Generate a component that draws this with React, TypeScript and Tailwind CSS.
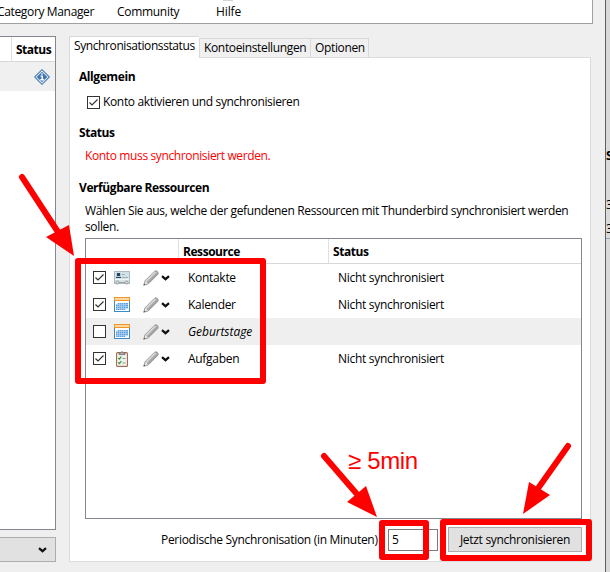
'use client';

import { ReactNode } from 'react';

interface Resource {
  name: string;
  icon: 'contacts' | 'calendar' | 'tasks';
  checked: boolean;
  status: string;
}

const resources: Resource[] = [
  { name: 'Kontakte', icon: 'contacts', checked: true, status: 'Nicht synchronisiert' },
  { name: 'Kalender', icon: 'calendar', checked: true, status: 'Nicht synchronisiert' },
  { name: 'Geburtstage', icon: 'calendar', checked: false, status: '' },
  { name: 'Aufgaben', icon: 'tasks', checked: true, status: 'Nicht synchronisiert' },
];

function Checkbox({ checked }: { checked: boolean }) {
  return (
    <svg width="13" height="13" viewBox="0 0 13 13" className="shrink-0">
      <rect x="0.5" y="0.5" width="12" height="12" fill="#fff" stroke="#333" />
      {checked && <path d="M2.5 6.5 L5 9 L10.5 3.5" fill="none" stroke="#333" strokeWidth="1.2" />}
    </svg>
  );
}

function Chevron() {
  return (
    <svg width="9" height="6" viewBox="0 0 9 6" className="shrink-0">
      <path d="M1 1.2 L4.5 4.2 L8 1.2" fill="none" stroke="#111" strokeWidth="2.2" />
    </svg>
  );
}

function Pencil() {
  return (
    <svg width="16" height="16" viewBox="0 0 16 16" className="shrink-0">
      <path d="M0.7 15.3 L2.2 10.6 L11.6 1.2 Q13 0.2 14.5 1.6 Q15.8 3 14.8 4.4 L5.4 13.8 Z" fill="#b4b4b4" stroke="#858585" strokeWidth="0.8" />
      <path d="M3 11.2 L12.2 2" stroke="#dcdcdc" strokeWidth="1.4" />
      <path d="M4.8 12.8 L14 3.6" stroke="#939393" strokeWidth="0.9" />
      <path d="M1.2 14.8 L2.5 11 L5 13.4 Z" fill="#e4e4e4" />
      <path d="M0.7 15.3 L1.3 13.4 L2.6 14.7 Z" fill="#555" />
    </svg>
  );
}

function ResourceIcon({ icon }: { icon: Resource['icon'] }) {
  if (icon === 'contacts') {
    return (
      <svg width="16" height="16" viewBox="0 0 16 16">
        <rect x="0.5" y="1.5" width="15" height="12" fill="#d3e2e7" stroke="#a9bac0" />
        <rect x="2" y="3" width="5" height="5" fill="#b4cbe0" />
        <rect x="3" y="3" width="3" height="3" fill="#29415c" />
        <rect x="2" y="7" width="5" height="1" fill="#29415c" />
        <path d="M8 4.5 H11 M8 7.5 H14" stroke="#9db2ba" />
        <path d="M1 9.5 H15" stroke="#f2f7f8" />
        <rect x="5" y="12" width="6" height="1" fill="#9aa6aa" />
        <circle cx="3.5" cy="12.5" r="1.5" fill="#ddd" stroke="#999" />
        <circle cx="12.5" cy="12.5" r="1.5" fill="#ddd" stroke="#999" />
      </svg>
    );
  }
  if (icon === 'calendar') {
    return (
      <svg width="16" height="16" viewBox="0 0 16 16">
        <rect x="0.5" y="1.5" width="15" height="13" fill="#fff" stroke="#3c8bc8" />
        <rect x="0" y="0" width="16" height="4" fill="#f0952a" />
        <rect x="1" y="1" width="14" height="2" fill="#fbd9a4" />
        <path d="M4 6 H14 V11 H11 V13 H2 V7 H4 Z" fill="#5e9ede" />
        <path d="M2 7.5 H14 M2 9.5 H14 M2 11.5 H14" stroke="#b5d3f0" strokeWidth="0.7" />
        <path d="M3.5 6 V13 M5.5 6 V13 M7.5 6 V13 M9.5 6 V13 M11.5 6 V13" stroke="#b5d3f0" strokeWidth="0.7" />
      </svg>
    );
  }
  return (
    <svg width="16" height="16" viewBox="0 0 16 16">
      <rect x="2.6" y="1.6" width="10.8" height="13.8" rx="1" fill="#fff" stroke="#a36b50" strokeWidth="1.2" />
      <rect x="3.8" y="3" width="8.4" height="11.2" fill="#eef1ee" />
      <path d="M5 3.6 V1.8 H6.6 Q8 -0.6 9.4 1.8 H11 V3.6 Z" fill="#aaa" stroke="#666" strokeWidth="0.7" />
      <path d="M4.3 6.8 L5.4 8 L7.3 5.6 M4.3 11.3 L5.4 12.5 L7.3 10.1" fill="none" stroke="#269a36" strokeWidth="1.2" />
      <path d="M8.5 7.5 H11.5 M8.5 12 H11.5" stroke="#8f9790" />
    </svg>
  );
}

function InfoIcon() {
  return (
    <svg width="16" height="16" viewBox="0 0 16 16">
      <path d="M8 0.7 L15.3 8 L8 15.3 L0.7 8 Z" fill="#e8f1f8" stroke="#5684b0" strokeWidth="1.1" strokeLinejoin="round" />
      <path d="M8 2.7 L13.3 8 L8 13.3 L2.7 8 Z" fill="#4078ad" />
      <path d="M8 4.3 V5.8 M6.5 7.1 H8.2 V10.5 M6.3 10.7 H9.9" fill="none" stroke="#fff" strokeWidth="1.4" />
    </svg>
  );
}

function Heading({ children }: { children: ReactNode }) {
  return <div className="h-4 text-[12px] leading-4 font-bold tracking-[-0.42px]">{children}</div>;
}

// Red arrows and frames drawn over the dialog
function Annotations() {
  return (
    <div className="pointer-events-none absolute inset-0">
      <svg width="610" height="572" viewBox="0 0 610 572">
        <g fill="none" stroke="#f00" strokeWidth="6" strokeLinejoin="round" strokeLinecap="round">
          <rect x="78" y="261" width="185" height="120" />
          <rect x="382" y="523" width="44" height="34" />
          <rect x="443" y="522" width="146" height="36" />
          <path d="M22 177 L58 232" />
          <path d="M324 456 L356 493" />
          <path d="M568 446 L539 487" />
        </g>
        <g fill="#f00">
          <path d="M46 237 L69 225 L74 256 Z" />
          <path d="M347 502 L366 486 L377 517 Z" />
          <path d="M529 482 L550 495 L523 514 Z" />
        </g>
      </svg>
      <div className="absolute top-[446px] left-[348px] font-['Liberation_Sans',Arial,sans-serif] text-[24px] leading-[30px] whitespace-pre text-[#f00]">≥ 5min</div>
    </div>
  );
}

export default function App() {
  return (
    <div className="relative flex h-[572px] w-[610px] overflow-hidden bg-[#efefef] font-['Open_Sans','Noto_Sans',sans-serif] text-[12px] leading-4 tracking-[-0.35px] whitespace-nowrap text-black">
      <div className="flex w-[605px] shrink-0 flex-col">
        {/* Toolbar */}
        <div className="relative flex h-6 w-[593px] border-r border-b border-[#a0a0a0] bg-white pt-1">
          <div className="-ml-[3px] w-[120px]">Category Manager</div>
          <div className="w-[99px] tracking-[-0.3px]">Community</div>
          <div className="tracking-[-0.1px]">Hilfe</div>
          <div className="absolute top-0 left-[223px] h-px w-[10px] bg-[#d4d4d4]" />
        </div>

        <div className="flex pt-3">
          {/* Account list */}
          <div className="w-14">
            <div className="h-[494px] border-t border-r border-b border-[#828790] bg-white">
              <div className="flex h-[25px] border-b border-[#d8d8d8]">
                <div className="w-3 border-r border-[#e0e0e0]" />
                <div className="pt-[5px] pl-1 font-bold tracking-[-0.5px]">Status</div>
              </div>
              <div className="flex h-[29px] justify-end bg-[#f0f0f0] pt-[7px] pr-[5px]">
                <InfoIcon />
              </div>
            </div>
            <div className="mt-[7px] flex h-[25px] items-center justify-end border border-l-0 border-[#adadad] bg-[#e1e1e1] pr-2">
              <Chevron />
            </div>
          </div>

          <div className="ml-[13px] w-[522px]">
            {/* Tabs */}
            <div className="relative z-10 flex h-[21px] items-end">
              <div className="h-[22px] w-[130px] self-start border-t border-l border-[#d9d9d9] bg-white pt-[1px] pl-1 tracking-[-0.4px]">Synchronisationsstatus</div>
              <div className="h-[19px] w-[112px] border-t border-r border-l border-[#d9d9d9] bg-[#f0f0f0] pt-[1px] pl-1">Kontoeinstellungen</div>
              <div className="h-[19px] w-[58px] border-t border-r border-[#d9d9d9] bg-[#f0f0f0] pt-[1px] pl-1">Optionen</div>
            </div>

            <div className="flex h-[505px] flex-col border border-[#dcdcdc] bg-white">
              <div className="pt-[11px] pl-[9px]">
                <Heading>Allgemein</Heading>
                <div className="mt-[9px] ml-2 flex items-center gap-[3px]">
                  <Checkbox checked />
                  <span>Konto aktivieren und synchronisieren</span>
                </div>
                <div className="mt-[15px]">
                  <Heading>Status</Heading>
                </div>
                <div className="mt-[7px] ml-[6px] tracking-[-0.37px] text-[#f00]">Konto muss synchronisiert werden.</div>
                <div className="mt-4">
                  <Heading>Verfügbare Ressourcen</Heading>
                </div>
                <div className="mt-[7px] ml-[6px]">
                  Wählen Sie aus, welche der gefundenen Ressourcen mit Thunderbird synchronisiert werden
                  <br />
                  sollen.
                </div>
              </div>

              {/* Resource table */}
              <div className="mt-[3px] ml-[15px] h-[281px] w-[497px] border border-[#828790]">
                <div className="flex h-[25px] border-b border-[#d8d8d8] font-bold tracking-[-0.45px]">
                  <div className="w-[93px] border-r border-[#e0e0e0]" />
                  <div className="w-[150px] border-r border-[#e0e0e0] pt-[5px] pl-[4px]">Ressource</div>
                  <div className="pt-[5px] pl-1">Status</div>
                </div>
                {resources.map((r) => (
                  <div key={r.name} className={`flex h-[27px] items-center tracking-[-0.3px] ${r.checked ? '' : 'bg-[#efefef]'}`}>
                    <div className="flex w-[102px] items-center pl-[7px]">
                      <Checkbox checked={r.checked} />
                      <div className="ml-2 flex w-[29px]">
                        <ResourceIcon icon={r.icon} />
                      </div>
                      <Pencil />
                      <div className="ml-[2px] flex">
                        <Chevron />
                      </div>
                    </div>
                    <div className={`w-[150px] ${r.checked ? '' : 'tracking-[-0.05px] italic'}`}>{r.name}</div>
                    <div>{r.status}</div>
                  </div>
                ))}
              </div>

              <div className="mt-2 flex h-[25px] items-center tracking-[-0.3px]">
                <div className="ml-[91px] w-[227px]">Periodische Synchronisation (in Minuten)</div>
                <div className="h-[22px] w-[50px] border border-[#7a7a7a] pt-[2px] pl-[3px]">5</div>
                <div className="ml-[10px] flex h-[25px] w-[134px] items-center justify-center border border-[#adadad] bg-[#e1e1e1]">
                  Jetzt synchronisieren
                </div>
              </div>
            </div>
          </div>
        </div>
      </div>

      {/* Edge of the window behind */}
      <div className="w-[5px] shrink-0 overflow-hidden border-l border-[#606060] bg-[#d9d9d9]">
        <div className="mt-[148px] h-[49px] font-bold">S</div>
        <div className="h-6">3</div>
        <div className="h-[18px] border-b border-[#9aa5b0]">3</div>
      </div>

      <Annotations />
    </div>
  );
}
